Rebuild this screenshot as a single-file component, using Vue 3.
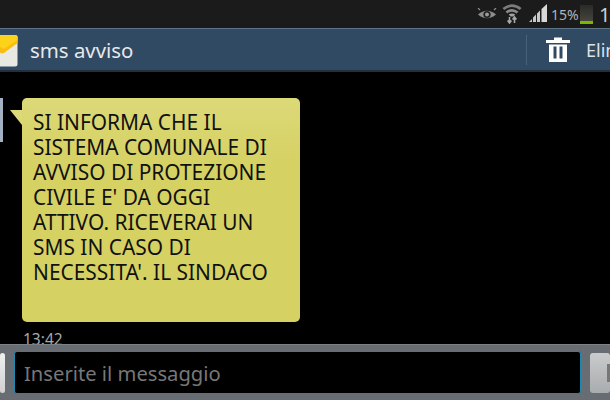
<script setup>
const lines = [
  'SI INFORMA CHE IL',
  'SISTEMA COMUNALE DI',
  'AVVISO DI PROTEZIONE',
  "CIVILE E' DA OGGI",
  'ATTIVO. RICEVERAI UN',
  'SMS IN CASO DI',
  "NECESSITA'. IL SINDACO"
]
</script>

<template>
  <div class="phone">
    <div class="status">
      <svg class="ic-eye" width="20" height="14" viewBox="0 0 20 14">
        <path d="M1 6.5 Q10 -1 19 6.5 Q10 14 1 6.5Z" fill="#8c8c8c" />
        <circle cx="10" cy="6.5" r="3.6" fill="#1c1c1c" />
        <circle cx="10" cy="6.5" r="2" fill="#9a9a9a" />
        <path d="M3 2 L1 0 M17 2 L19 0" stroke="#8c8c8c" stroke-width="1.2" />
      </svg>
      <svg class="ic-wifi" width="20" height="21" viewBox="0 0 20 21">
        <path d="M0.5 5 Q10 -2.5 19.5 5 L17.8 7 Q10 1 2.2 7Z" fill="#7c7c7c" />
        <path d="M3.6 8.4 Q10 3.4 16.4 8.4 L14.7 10.4 Q10 7 5.3 10.4Z" fill="#8a8a8a" />
        <path d="M6.8 11.6 Q10 9.4 13.2 11.6 L11.6 13.6 L8.4 13.6Z" fill="#a0a0a0" />
        <path d="M7.5 14 L7.5 20 M5.6 17.6 L7.5 20 L9.4 17.6 M12.5 20 L12.5 14 M10.6 16.4 L12.5 14 L14.4 16.4" stroke="#a8a8a8" stroke-width="1.6" fill="none" />
      </svg>
      <svg class="ic-signal" width="19" height="19" viewBox="0 0 19 19">
        <path d="M0 18 L3 15 L3 18Z M4 18 L4 13.5 L7 10.5 L7 18Z M8 18 L8 9.5 L11 6.5 L11 18Z" fill="#c8c8c8" />
        <path d="M12.5 18 L12.5 5 L18 0 L18 18Z" fill="#d8d8d8" />
      </svg>
      <span class="pct">15%</span>
      <div class="battery"><div class="charge"></div></div>
      <span class="clock">13:42</span>
    </div>

    <div class="header">
      <div class="title-wrap">
        <svg class="ic-mail" width="18" height="33" viewBox="0 0 18 33">
          <path d="M0 1 H15 Q17.500 1 17.500 3.500 V30 Q17.500 32.500 15 32.500 H0Z" fill="#e9e9e4" />
          <path d="M0 1 H15 Q17.500 1 17.500 3.500 V9 L4 19 Q2 20 0 18.500Z" fill="#f8bd10" />
          <path d="M0 1 H15 Q17.500 1 17.500 3.500 V6 L4 15 L0 13Z" fill="#fdd21a" />
        </svg>
        <span class="title">sms avviso</span>
      </div>
      <div class="divider"></div>
      <div class="action">
        <svg class="ic-trash" width="24" height="25" viewBox="0 0 24 25">
          <path d="M0 3 H8 V0.500 H16 V3 H24 V6 H0Z" fill="#fff" />
          <path d="M3 7.500 H21 V25 H3Z M7.500 9.500 V21.500 H10.500 V9.500Z M13.500 9.500 V21.500 H16.500 V9.500Z" fill="#fff" fill-rule="evenodd" />
        </svg>
        <span class="action-label">Elimina</span>
      </div>
    </div>

    <div class="thread">
      <div class="msg">
        <div class="avatar"></div>
        <div class="col">
          <div class="bubble">
            <div v-for="line in lines" :key="line" class="line">{{ line }}</div>
          </div>
          <div class="time">13:42</div>
        </div>
      </div>
    </div>

    <div class="composer">
      <div class="side-btn left"></div>
      <div class="input">Inserite il messaggio</div>
      <div class="side-btn right"><div class="send-mark"></div></div>
    </div>
  </div>
</template>

<style>
html, body {
  margin: 0;
  background: #000;
  overflow: hidden;
}
</style>

<style scoped>
.phone {
  width: 610px;
  height: 400px;
  display: flex;
  flex-direction: column;
  overflow: hidden;
  background: #000;
  font-family: "Noto Sans", "DejaVu Sans", sans-serif;
}

.status {
  height: 28px;
  flex: none;
  box-sizing: border-box;
  background: #1b1b1b;
  display: flex;
  align-items: center;
  padding-left: 477px;
  white-space: nowrap;
  overflow: hidden;
}
.status > * { flex: none; }
.ic-eye { margin-right: 5px; margin-top: 1px; }
.ic-wifi { margin-right: 7px; margin-top: -1px; }
.ic-signal { margin-right: 3px; margin-top: -2px; }
.pct {
  color: #b4b4b4;
  font-size: 14px;
  width: 28px;
}
.battery {
  width: 13px;
  height: 19px;
  margin-left: 1px;
  background: linear-gradient(#2a2a2a, #4a4a40);
  display: flex;
  align-items: flex-end;
}
.charge {
  width: 100%;
  height: 3px;
  background: #7ab800;
}
.clock {
  color: #cfcfcf;
  font-size: 20px;
  margin-left: 6px;
}

.header {
  height: 44px;
  flex: none;
  box-sizing: border-box;
  background: #304a63;
  border-top: 1px solid #5c7488;
  border-bottom: 2px solid #22303d;
  display: flex;
  align-items: center;
}
.title-wrap {
  width: 526px;
  flex: none;
  display: flex;
  align-items: center;
}
.ic-mail { margin-right: 12px; margin-top: 1px; }
.title {
  color: #e6e8ea;
  font-size: 20.400px;
}
.divider {
  width: 1px;
  height: 30px;
  background: #47627a;
  flex: none;
}
.action {
  display: flex;
  align-items: center;
  margin-left: 19px;
  white-space: nowrap;
}
.ic-trash { margin-right: 16px; flex: none; }
.action-label {
  color: #dfe3e6;
  font-size: 18px;
}

.thread {
  flex: 1;
  min-height: 0;
  overflow: hidden;
  padding-top: 26px;
}
.msg {
  display: flex;
  align-items: flex-start;
}
.avatar {
  width: 3px;
  height: 44px;
  background: #a4b1c2;
  flex: none;
  margin-right: 19px;
}
.col {
  display: flex;
  flex-direction: column;
}
.bubble {
  position: relative;
  width: 278px;
  height: 224px;
  box-sizing: border-box;
  padding: 12px 0 0 11px;
  background: linear-gradient(#dcd978, #d6d163 30%, #d6d163);
  border-radius: 5px;
  color: #111;
  font-size: 20.900px;
  line-height: 25px;
  white-space: nowrap;
}
.bubble::before {
  content: "";
  position: absolute;
  left: -12px;
  top: 12px;
  border-right: 12px solid #dcd978;
  border-bottom: 15px solid transparent;
}
.time {
  color: #a8a8a8;
  font-size: 15.500px;
  margin: 6px 0 0 1px;
}

.composer {
  height: 56px;
  flex: none;
  box-sizing: border-box;
  background: #676d72;
  border-top: 1px solid #7d8286;
  display: flex;
  align-items: center;
  gap: 9px;
}
.side-btn {
  height: 40px;
  flex: none;
  border-radius: 3px;
}
.side-btn.left {
  width: 5px;
  background: linear-gradient(#f0f0f0, #d0d0d0);
}
.side-btn.right {
  flex: 1;
  background: linear-gradient(#c9cbcc, #a9acae);
  display: flex;
  align-items: center;
  justify-content: flex-end;
}
.send-mark {
  width: 3px;
  height: 18px;
  background: #777;
}
.input {
  width: 567px;
  height: 43px;
  flex: none;
  box-sizing: border-box;
  background: #000;
  border: 1px solid #1c8ab0;
  border-radius: 3px;
  color: #777;
  font-size: 20.200px;
  line-height: 42px;
  padding-left: 9px;
}
</style>
